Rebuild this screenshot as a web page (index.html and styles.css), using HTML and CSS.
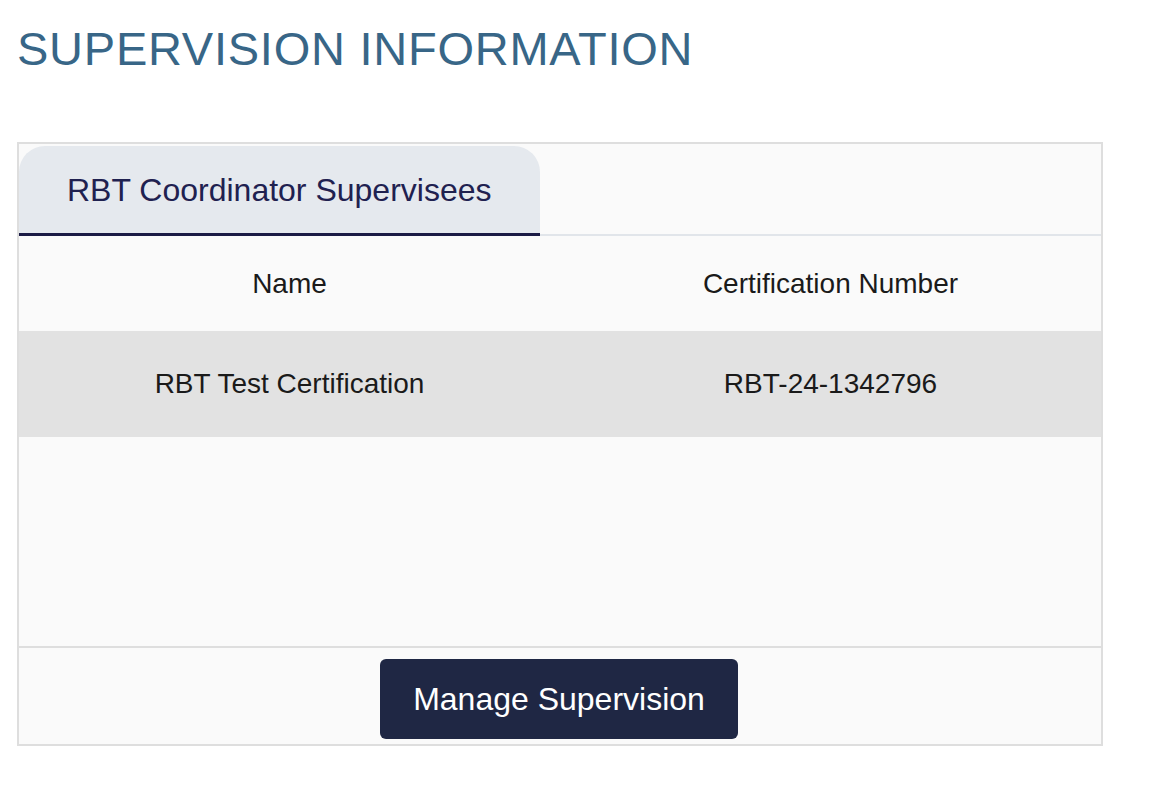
FILE: index.html
```html
<!DOCTYPE html>
<html>
<head>
<meta charset="utf-8">
<link rel="stylesheet" href="styles.css">
</head>
<body>
<h1 class="title">SUPERVISION INFORMATION</h1>
<div class="panel">
  <div class="tabs">
    <div class="tab">RBT Coordinator Supervisees</div>
  </div>
  <div class="body">
    <div class="row head">
      <div class="cell">Name</div>
      <div class="cell">Certification Number</div>
    </div>
    <div class="row data">
      <div class="cell">RBT Test Certification</div>
      <div class="cell">RBT-24-1342796</div>
    </div>
  </div>
  <div class="footer">
    <button class="btn">Manage Supervision</button>
  </div>
</div>
</body>
</html>
```

FILE: styles.css
```css
html, body {
  margin: 0;
  padding: 0;
  background: #ffffff;
  font-family: "Liberation Sans", Arial, sans-serif;
}
body {
  padding: 0 0 0 17px;
}
.title {
  margin: 0;
  padding-top: 24px;
  height: 120px;
  box-sizing: border-box;
  font-size: 47px;
  font-weight: 400;
  color: #386687;
  line-height: 50px;
  letter-spacing: 0.75px;
}
.panel {
  width: 1086px;
  box-sizing: border-box;
  margin-top: 22px;
  border: 2px solid #dedede;
  background: #fafafa;
  display: flex;
  flex-direction: column;
}
.tabs {
  height: 92px;
  box-sizing: border-box;
  border-bottom: 2px solid #e1e5ea;
  display: flex;
  align-items: flex-end;
}
.tab {
  width: 521px;
  height: 90px;
  box-sizing: border-box;
  margin-bottom: -2px;
  background: #e5e9ee;
  border-radius: 26px 26px 0 0;
  border-bottom: 3px solid #1b1b45;
  color: #1f2150;
  font-size: 32px;
  padding: 26px 0 0 48px;
  line-height: 36px;
}
.body {
  height: 410px;
  display: flex;
  flex-direction: column;
}
.row {
  display: grid;
  grid-template-columns: 1fr 1fr;
  align-items: center;
  color: #1a1a1a;
  font-size: 28px;
}
.row .cell {
  text-align: center;
}
.head {
  height: 95px;
}
.data {
  height: 106px;
  background: #e2e2e2;
}
.footer {
  border-top: 2px solid #dedede;
  height: 98px;
  box-sizing: border-box;
  display: flex;
  justify-content: center;
  padding-top: 11px;
}
.btn {
  width: 358px;
  height: 80px;
  border: none;
  border-radius: 6px;
  background: #1f2744;
  color: #ffffff;
  font-family: "Liberation Sans", Arial, sans-serif;
  font-size: 32px;
  padding: 0;
  margin-left: -2px;
}
```
